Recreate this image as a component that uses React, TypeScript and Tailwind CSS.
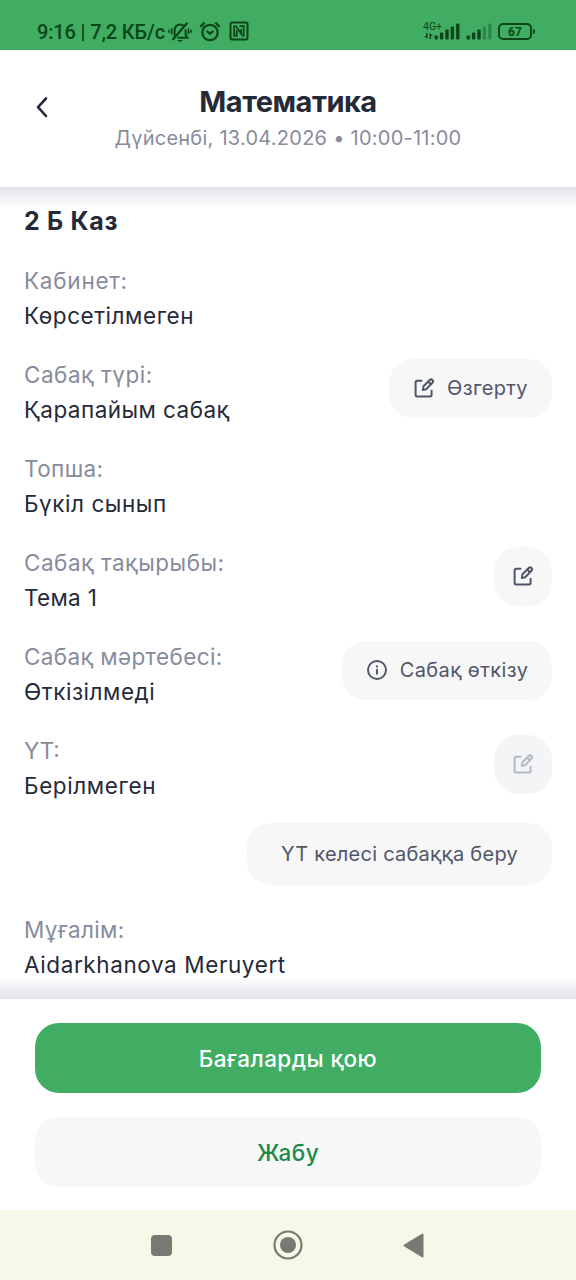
import type { ReactNode } from 'react';
import clsx from 'clsx';

const EditIcon = () => (
  <svg width="22" height="22" viewBox="0 0 22 22" fill="none" stroke="currentColor" strokeWidth="2" strokeLinecap="round" strokeLinejoin="round">
    <path d="M8.5 3.8H4.2a1.600 1.600 0 0 0-1.600 1.600v12.400a1.600 1.600 0 0 0 1.600 1.600h12.800a1.600 1.600 0 0 0 1.600-1.600v-4" />
    <path d="M9.800 13.100l.7-3.800 6.200-6.300a1.900 1.900 0 0 1 2.700 2.700l-6.200 6.500z" />
    <path d="M15.400 4.700l2.300 2.300" />
  </svg>
);

const InfoIcon = () => (
  <svg width="22" height="22" viewBox="0 0 22 22" fill="none" stroke="currentColor" strokeWidth="1.9" strokeLinecap="round">
    <circle cx="11" cy="11" r="9" />
    <path d="M11 10.4v4.300" />
    <path d="M11 7.300v.1" strokeWidth="2.200" />
  </svg>
);

const MutedBellIcon = () => (
  <svg width="24" height="22" viewBox="0 0 24 22" fill="none" stroke="currentColor" strokeWidth="2">
    <path d="M6.600 15.400V9.600c0-3.400 2-5.800 5.400-6.100 1.600 0 2.900.5 3.800 1.400M17.600 8.500v5.400l1.800 2.900H9.500" />
    <path d="M19.300 1.800L4.500 19" strokeWidth="2.200" />
    <path d="M3.700 7.300v6M1 8.800v3M20.500 7.300v6M23 8.800v3" strokeWidth="1.600" />
    <path d="M9.300 19h5.400c-.6 1.300-1.500 1.700-2.700 1.700S9.900 20.300 9.300 19z" fill="currentColor" stroke="none" />
  </svg>
);

const AlarmIcon = () => (
  <svg width="22" height="22" viewBox="0 0 22 22" fill="none" stroke="currentColor" strokeWidth="2.300">
    <circle cx="11" cy="11.500" r="7.700" />
    <path d="M7.800 10l3.100 2.800 3.400-2.800" />
    <path d="M1.200 5.800l4.500-4.100M20.800 5.800l-4.500-4.100" />
  </svg>
);

const NfcIcon = () => (
  <svg width="20" height="20" viewBox="0 0 20 20" fill="none" stroke="currentColor" strokeWidth="2">
    <rect x="1.500" y="1.500" width="17" height="17" rx="1.500" />
    <path d="M5.200 15.700V5.400h2l5 7.400V8M7.800 9v5.800H5.500M10.500 5.200h4.200v9.500h-2" strokeWidth="1.700" />
  </svg>
);

const SignalIcon = ({ active }: { active: number }) => (
  <svg width="26" height="17" viewBox="0 0 26 17" fill="currentColor">
    {[4, 7, 10, 13, 16].map((height, i) => (
      <rect
        key={height}
        x={0.5 + i * 5.4}
        y={16.5 - height}
        width="3.400"
        height={height}
        rx="1"
        opacity={i < active ? 1 : 0.35}
      />
    ))}
  </svg>
);

const StatusBar = () => (
  <header className="flex h-[50px] items-start bg-[#40ad62] pl-[37px] pt-[21px] font-[Roboto,sans-serif] text-[#0b4519]">
    <span className="w-[131px] whitespace-nowrap text-[20px] font-medium leading-[22px] tracking-[-0.15px]">
      9:16 | 7,2 КБ/с
    </span>
    <MutedBellIcon />
    <div className="ml-[7px]">
      <AlarmIcon />
    </div>
    <div className="ml-[8px]">
      <NfcIcon />
    </div>
    <div className="ml-[174px] w-[11px]">
      <p className="whitespace-nowrap text-[10.500px] leading-[11px]">4G+</p>
      <svg width="9" height="6" viewBox="0 0 9 6" fill="currentColor" className="mt-[1px] ml-[1px]">
        <path d="M2 0h1.500v6L0 3h2zM5.500 0L9 3H7v3H5.500z" />
      </svg>
    </div>
    <div className="mt-[2px]">
      <SignalIcon active={5} />
    </div>
    <div className="ml-[6px] mt-[2px]">
      <SignalIcon active={3} />
    </div>
    <div className="ml-[6px] mt-[2px] flex items-center gap-px">
      <span className="flex h-[17px] w-[34px] items-center justify-center rounded-[5px] border-2 border-current text-[12px] font-bold leading-none">
        67
      </span>
      <span className="h-[5px] w-[2px] rounded-r-sm bg-current" />
    </div>
  </header>
);

type FieldProps = {
  label: string;
  value: string;
  labelClass?: string;
  valueClass?: string;
  children?: ReactNode;
};

const Field = ({ label, value, labelClass, valueClass, children }: FieldProps) => (
  <div className="flex h-[70px] items-start justify-between">
    <div className="whitespace-nowrap text-[22.500px] leading-[35px]">
      <p className={clsx('text-[#878c9c]', labelClass)}>{label}</p>
      <p className={clsx('text-[#252a38]', valueClass)}>{value}</p>
    </div>
    {children}
  </div>
);

const SmallButton = ({ className, children }: { className?: string; children: ReactNode }) => (
  <button
    type="button"
    className={clsx(
      'mt-[2px] flex h-[59px] items-center justify-center whitespace-nowrap rounded-[24px] pb-px text-[20px]',
      className,
    )}
  >
    {children}
  </button>
);

export default function App() {
  return (
    <div className="flex h-[1280px] w-[576px] flex-col overflow-hidden bg-white font-[Inter,sans-serif] text-[#252a38]">
      <StatusBar />

      <div className="flex h-[137px] shrink-0 items-start">
        <button type="button" className="ml-[33px] mt-[45px]">
          <svg width="16" height="24" viewBox="0 0 16 24" fill="none" stroke="currentColor" strokeWidth="2.600" strokeLinecap="round" strokeLinejoin="round">
            <path d="M13 3.500L5 12.100l8 8.900" />
          </svg>
        </button>
        <div className="mr-[49px] flex-1 pt-[33px] text-center">
          <h1 className="text-[29px] font-bold leading-[38px] tracking-[-0.5px]">Математика</h1>
          <p className="text-[20px] leading-[34px] tracking-[0.25px] text-[#878c9c]">
            Дүйсенбі, 13.04.2026 • 10:00-11:00
          </p>
        </div>
      </div>

      <main className="flex h-[812px] shrink-0 flex-col bg-[linear-gradient(to_bottom,#e3e4ea,#ffffff_22px,#ffffff_790px,#e2e2e8)] px-6">
        <h2 className="mt-[17px] text-[25px] font-bold leading-[35px] tracking-[0.7px]">2 Б Каз</h2>
        <div className="mt-[24px] flex flex-col gap-6">
          <Field
            label="Кабинет:"
            value="Көрсетілмеген"
            labelClass="tracking-[0.75px]"
            valueClass="tracking-[0.55px]"
          />
          <Field
            label="Сабақ түрі:"
            value="Қарапайым сабақ"
            labelClass="tracking-[0.5px]"
            valueClass="tracking-[0.45px]"
          >
            <SmallButton className="w-[163px] gap-[12px] bg-[#f7f7f7] tracking-[0.35px] text-[#50566a]">
              <EditIcon />
              <span>Өзгерту</span>
            </SmallButton>
          </Field>
          <Field
            label="Топша:"
            value="Бүкіл сынып"
            labelClass="tracking-[0.4px]"
            valueClass="tracking-[0.55px]"
          />
          <Field
            label="Сабақ тақырыбы:"
            value="Тема 1"
            labelClass="tracking-[0.5px]"
            valueClass="tracking-[0.3px]"
          >
            <SmallButton className="w-[58px] bg-[#f7f7f7] text-[#50566a]">
              <EditIcon />
            </SmallButton>
          </Field>
          <Field
            label="Сабақ мәртебесі:"
            value="Өткізілмеді"
            labelClass="tracking-[0.37px]"
            valueClass="tracking-[0.55px]"
          >
            <SmallButton className="w-[210px] gap-[12px] bg-[#f7f7f7] tracking-[0.4px] text-[#50566a]">
              <InfoIcon />
              <span>Сабақ өткізу</span>
            </SmallButton>
          </Field>
          <Field label="ҮТ:" value="Берілмеген" valueClass="tracking-[0.6px]">
            <SmallButton className="w-[58px] bg-[#f3f5f7] text-[#b5bac2]">
              <EditIcon />
            </SmallButton>
          </Field>
        </div>
        <button
          type="button"
          className="mb-[27px] mt-5 h-[62px] w-[305px] shrink-0 self-end whitespace-nowrap rounded-[24px] bg-[#f7f7f7] text-[20px] tracking-[0.25px] text-[#50566a]"
        >
          <span>ҮТ келесі сабаққа беру</span>
        </button>
        <Field
          label="Мұғалім:"
          value="Aidarkhanova Meruyert"
          labelClass="tracking-[0.3px]"
          valueClass="tracking-[0.6px]"
        />
      </main>

      <footer className="flex h-[211px] shrink-0 flex-col gap-6 bg-white px-[35px] pt-6 text-[22.500px] font-medium tracking-[0.45px]">
        <button type="button" className="h-[70px] rounded-[24px] bg-[#40ad62] pt-[2px] text-white">
          <span>Бағаларды қою</span>
        </button>
        <button type="button" className="h-[70px] rounded-[24px] bg-[#f7f7f7] pt-[2px] text-[#1d8a4a]">
          <span>Жабу</span>
        </button>
      </footer>

      <nav className="flex h-[70px] shrink-0 items-center bg-[#f7f9e8] pl-[151px] text-[#777972]">
        <span className="h-[21px] w-[21px] rounded-[4px] bg-current" />
        <svg width="30" height="30" viewBox="0 0 30 30" className="ml-[101px]">
          <circle cx="15" cy="15" r="13.500" fill="none" stroke="currentColor" strokeWidth="2.200" />
          <circle cx="15" cy="15" r="8" fill="currentColor" />
        </svg>
        <svg width="21" height="25" viewBox="0 0 21 25" className="ml-[100px]">
          <path d="M1.500 12.500L19.500 1.500v22z" fill="currentColor" stroke="currentColor" strokeWidth="2" strokeLinejoin="round" />
        </svg>
      </nav>
    </div>
  );
}
